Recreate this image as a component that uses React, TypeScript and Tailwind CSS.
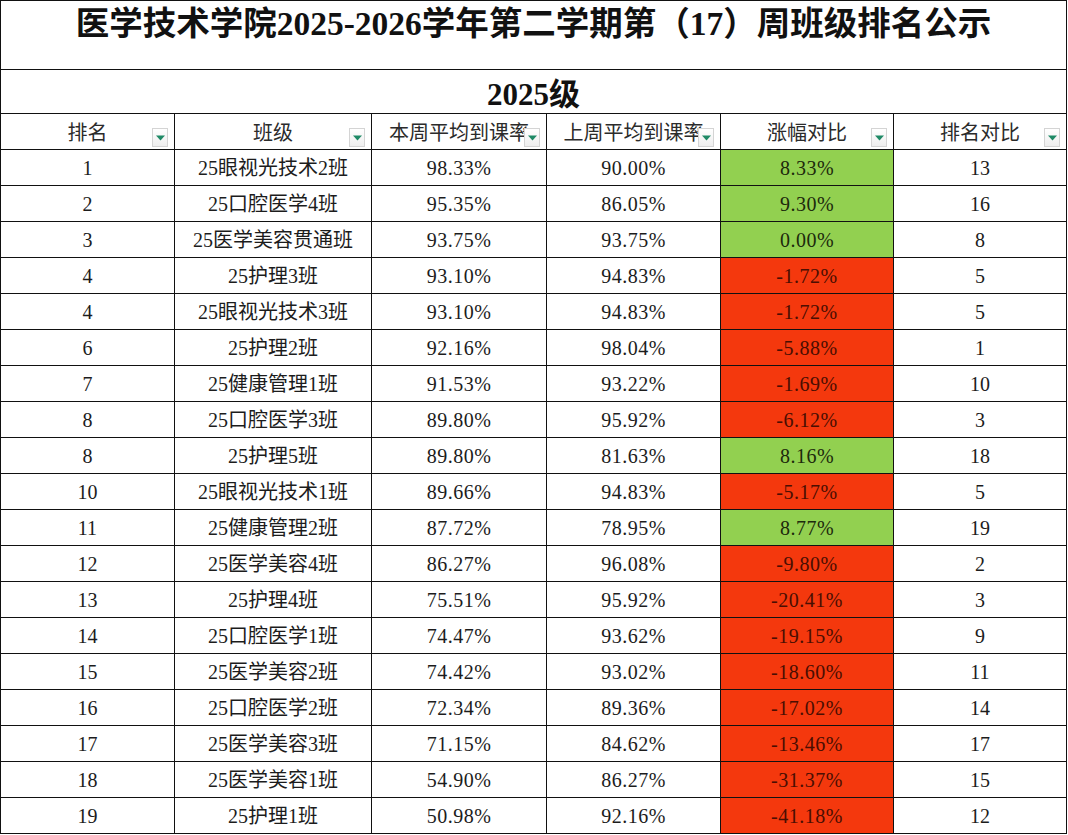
type Row = {
  rank: string;
  name: string;
  thisWeek: string;
  lastWeek: string;
  change: string;
  up: boolean;
  prevRank: string;
};

const ROWS: Row[] = [
  { rank: '1', name: '25眼视光技术2班', thisWeek: '98.33%', lastWeek: '90.00%', change: '8.33%', up: true, prevRank: '13' },
  { rank: '2', name: '25口腔医学4班', thisWeek: '95.35%', lastWeek: '86.05%', change: '9.30%', up: true, prevRank: '16' },
  { rank: '3', name: '25医学美容贯通班', thisWeek: '93.75%', lastWeek: '93.75%', change: '0.00%', up: true, prevRank: '8' },
  { rank: '4', name: '25护理3班', thisWeek: '93.10%', lastWeek: '94.83%', change: '-1.72%', up: false, prevRank: '5' },
  { rank: '4', name: '25眼视光技术3班', thisWeek: '93.10%', lastWeek: '94.83%', change: '-1.72%', up: false, prevRank: '5' },
  { rank: '6', name: '25护理2班', thisWeek: '92.16%', lastWeek: '98.04%', change: '-5.88%', up: false, prevRank: '1' },
  { rank: '7', name: '25健康管理1班', thisWeek: '91.53%', lastWeek: '93.22%', change: '-1.69%', up: false, prevRank: '10' },
  { rank: '8', name: '25口腔医学3班', thisWeek: '89.80%', lastWeek: '95.92%', change: '-6.12%', up: false, prevRank: '3' },
  { rank: '8', name: '25护理5班', thisWeek: '89.80%', lastWeek: '81.63%', change: '8.16%', up: true, prevRank: '18' },
  { rank: '10', name: '25眼视光技术1班', thisWeek: '89.66%', lastWeek: '94.83%', change: '-5.17%', up: false, prevRank: '5' },
  { rank: '11', name: '25健康管理2班', thisWeek: '87.72%', lastWeek: '78.95%', change: '8.77%', up: true, prevRank: '19' },
  { rank: '12', name: '25医学美容4班', thisWeek: '86.27%', lastWeek: '96.08%', change: '-9.80%', up: false, prevRank: '2' },
  { rank: '13', name: '25护理4班', thisWeek: '75.51%', lastWeek: '95.92%', change: '-20.41%', up: false, prevRank: '3' },
  { rank: '14', name: '25口腔医学1班', thisWeek: '74.47%', lastWeek: '93.62%', change: '-19.15%', up: false, prevRank: '9' },
  { rank: '15', name: '25医学美容2班', thisWeek: '74.42%', lastWeek: '93.02%', change: '-18.60%', up: false, prevRank: '11' },
  { rank: '16', name: '25口腔医学2班', thisWeek: '72.34%', lastWeek: '89.36%', change: '-17.02%', up: false, prevRank: '14' },
  { rank: '17', name: '25医学美容3班', thisWeek: '71.15%', lastWeek: '84.62%', change: '-13.46%', up: false, prevRank: '17' },
  { rank: '18', name: '25医学美容1班', thisWeek: '54.90%', lastWeek: '86.27%', change: '-31.37%', up: false, prevRank: '15' },
  { rank: '19', name: '25护理1班', thisWeek: '50.98%', lastWeek: '92.16%', change: '-41.18%', up: false, prevRank: '12' },
];

const HEADERS = ['排名', '班级', '本周平均到课率', '上周平均到课率', '涨幅对比', '排名对比'];

const GRID = 'grid grid-cols-[174px_197px_175px_174px_173px_173px]';

// Excel autofilter dropdown button
function FilterButton() {
  return (
    <div className="absolute right-[6px] bottom-[2px] w-[16px] h-[19px] border border-[#d4d4d4] bg-gradient-to-b from-white to-[#eeeeee] flex items-center justify-center">
      <svg width="9" height="6" viewBox="0 0 9 6">
        <path d="M0 0.5H9L4.5 5.5Z" fill="#1f8a66" />
      </svg>
    </div>
  );
}

export default function App() {
  return (
    <div
      className="w-[1068px] h-[835px] bg-white overflow-hidden text-[#1c1c1c]"
      style={{ fontFamily: '"Liberation Serif", "Noto Sans CJK SC", serif' }}
    >
      <div className="w-[1067px] border-t border-l border-[#111]">
        {/* Title */}
        <div className="h-[69px] border-r border-b border-[#111] flex justify-center pt-[3px]">
          <h1 className="text-[33.5px] leading-[40px] font-semibold text-[#111]">
            医学技术学院2025-2026学年第二学期第（17）周班级排名公示
          </h1>
        </div>

        {/* Grade */}
        <div className="h-[44px] border-r border-b border-[#111] flex items-center justify-center pt-[6px]">
          <h2 className="text-[31px] leading-[36px] font-semibold text-[#111]">2025级</h2>
        </div>

        {/* Column headers */}
        <div className={`${GRID} h-[36px]`}>
          {HEADERS.map((h) => (
            <div
              key={h}
              className="relative border-r border-b border-[#111] overflow-hidden whitespace-nowrap flex items-center justify-center pt-[3px] text-[20px] text-[#2b2b2b]"
            >
              {h}
              <FilterButton />
            </div>
          ))}
        </div>

        {/* Data rows */}
        {ROWS.map((r, i) => (
          <div key={i} className={`${GRID} h-[36px] text-[20px]`}>
            <div className="border-r border-b border-[#111] flex items-center justify-center pt-[1px]">{r.rank}</div>
            <div className="border-r border-b border-[#111] flex items-center justify-center pt-[1px]">{r.name}</div>
            <div className="border-r border-b border-[#111] flex items-center justify-center pt-[1px] tracking-[0.5px]">{r.thisWeek}</div>
            <div className="border-r border-b border-[#111] flex items-center justify-center pt-[1px] tracking-[0.5px]">{r.lastWeek}</div>
            <div
              className={
                r.up
                  ? 'border-r border-b border-[#111] flex items-center justify-center pt-[1px] tracking-[0.5px] bg-[#92d050] text-[#1d2a0c]'
                  : 'border-r border-b border-[#111] flex items-center justify-center pt-[1px] tracking-[0.5px] bg-[#f4380d] text-[#4a0e02]'
              }
            >
              {r.change}
            </div>
            <div className="border-r border-b border-[#111] flex items-center justify-center pt-[1px]">{r.prevRank}</div>
          </div>
        ))}
      </div>
    </div>
  );
}
